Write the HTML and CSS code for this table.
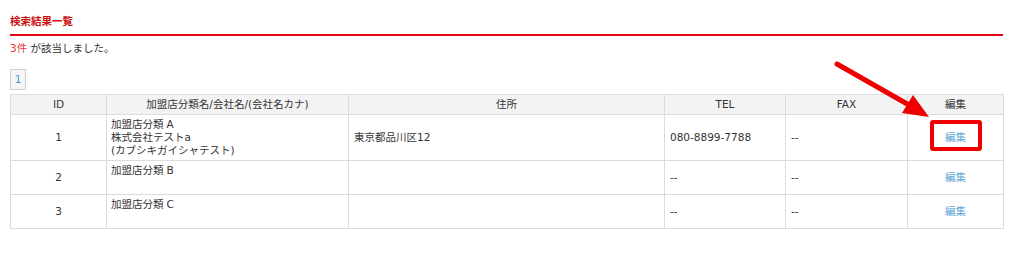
FILE: index.html
```html
<!DOCTYPE html>
<html lang="ja">
<head>
<meta charset="utf-8">
<link rel="stylesheet" href="styles.css">
</head>
<body>
<div class="page">
  <h2 class="title">検索結果一覧</h2>
  <p class="count"><span class="num">3件</span> が該当しました。</p>
  <div class="pager"><span class="pg">1</span></div>
  <table class="results">
    <colgroup>
      <col style="width:96px"><col style="width:242px"><col style="width:316px"><col style="width:121px"><col style="width:122px"><col style="width:96px">
    </colgroup>
    <thead>
      <tr><th>ID</th><th>加盟店分類名/会社名/(会社名カナ)</th><th>住所</th><th>TEL</th><th>FAX</th><th>編集</th></tr>
    </thead>
    <tbody>
      <tr class="r1"><td class="c">1</td><td class="name"><span class="cat">加盟店分類<span class="ltr">A</span></span><br>株式会社テストa<br>(カブシキガイシャテスト)</td><td>東京都品川区12</td><td>080-8899-7788</td><td>--</td><td class="c"><a href="#">編集</a></td></tr>
      <tr class="r2"><td class="c">2</td><td class="name"><span class="cat">加盟店分類<span class="ltr">B</span></span></td><td></td><td>--</td><td>--</td><td class="c"><a href="#">編集</a></td></tr>
      <tr class="r2"><td class="c">3</td><td class="name"><span class="cat">加盟店分類<span class="ltr">C</span></span></td><td></td><td>--</td><td>--</td><td class="c"><a href="#">編集</a></td></tr>
    </tbody>
  </table>
  <div class="hl-box"></div>
  <svg class="arrow" width="120" height="80" viewBox="0 0 120 80">
    <line x1="8" y1="6" x2="80" y2="47" stroke="#ee0000" stroke-width="5" stroke-linecap="round"/>
    <polygon points="100,59 73,55 84,37" fill="#ee0000"/>
  </svg>
</div>
</body>
</html>
```

FILE: styles.css
```css
html, body {
  margin: 0;
  padding: 0;
  background: #fff;
}
body {
  font-family: "DejaVu Sans", "Noto Sans CJK JP", sans-serif;
  font-size: 10.5px;
  color: #333;
}
.page {
  position: relative;
  padding: 14px 21px 20px 10px;
}
.title {
  margin: 0;
  font-size: 10.5px;
  font-weight: bold;
  color: #cc1111;
  line-height: 14px;
  padding-bottom: 6px;
  border-bottom: 2px solid #e60012;
}
.count {
  margin: 5px 0 0;
  line-height: 14px;
}
.num {
  color: #e8383d;
}
.pager {
  margin-top: 14px;
  display: flex;
}
.pg {
  display: inline-block;
  width: 14px;
  height: 19px;
  line-height: 19px;
  text-align: center;
  border: 1px solid #cfcfcf;
  background: #f6f6f6;
  color: #3f9ad6;
  font-size: 10.5px;
}
.results {
  margin-top: 4px;
  border-collapse: collapse;
  table-layout: fixed;
  width: 993px;
}
.results th, .results td {
  border: 1px solid #dcdcdc;
  font-weight: normal;
  padding: 0 5px;
  line-height: 13px;
  vertical-align: middle;
  text-align: left;
}
.results th {
  background: #f3f3f3;
  text-align: center;
  height: 19px;
}
.results td.c {
  text-align: center;
}
.results td.name {
  vertical-align: top;
  padding: 3px 4px 0;
}
.ltr {
  margin-left: 3px;
}
.r1 td { height: 42px; }
.r2 td { height: 30px; }
.results a {
  color: #5aa6d6;
  text-decoration: none;
}
.hl-box {
  position: absolute;
  left: 930px;
  top: 120px;
  width: 44px;
  height: 23px;
  border: 4px solid #ee0000;
  border-radius: 3px;
}
.arrow {
  position: absolute;
  left: 829px;
  top: 58px;
}
```
